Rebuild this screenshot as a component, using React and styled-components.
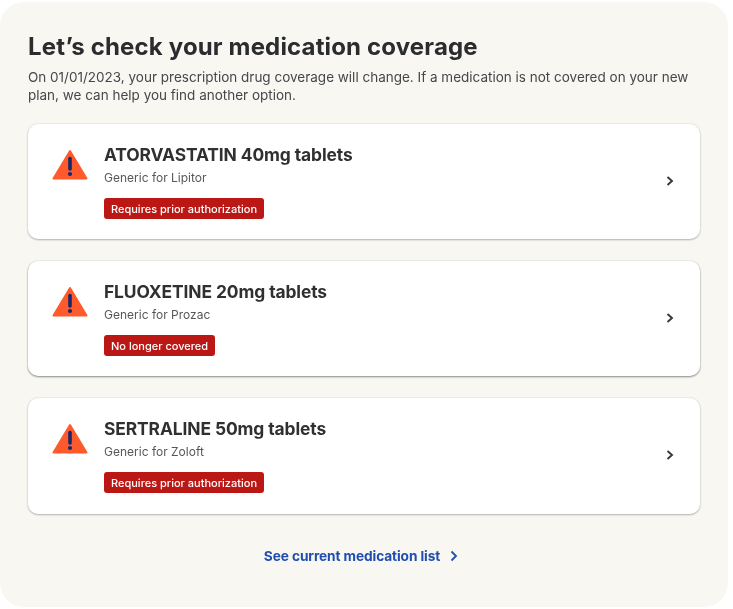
import React from "react";
import styled, { createGlobalStyle } from "styled-components";

const Global = createGlobalStyle`
  html, body { margin: 0; padding: 0; background: #fff; }
  body { font-family: Inter, "Noto Sans", sans-serif; }
`;

const Panel = styled.main`
  box-sizing: border-box;
  width: 728px;
  height: 605px;
  margin-top: 2px;
  padding: 29px 28px 0;
  background: #f8f7f2;
  border-radius: 24px;
  display: flex;
  flex-direction: column;
  filter: blur(0.4px);
`;

const Title = styled.h1`
  margin: 0;
  font-size: 24px;
  line-height: 32px;
  font-weight: 700;
  letter-spacing: 0.15px;
  color: #2b2c2e;
`;

const Intro = styled.p`
  margin: 5px 0 0;
  font-size: 13.5px;
  line-height: 18px;
  font-weight: 400;
  color: #45474a;
`;

const CardList = styled.div`
  margin-top: 20px;
  display: flex;
  flex-direction: column;
  gap: 22px;
`;

const Card = styled.article`
  box-sizing: border-box;
  height: ${p => p.$h}px;
  padding: 20px 24px 0;
  display: flex;
  align-items: flex-start;
  background: #fff;
  border-radius: 10px;
  box-shadow: 0 1px 2px 0 ${p => p.$dark ? "#8b8b88" : "#b3b3b0"}, 0 0 2px rgba(0, 0, 0, 0.14);
`;

const Alert = styled.svg`
  width: 36px;
  height: 32px;
  flex: none;
  margin-top: 5px;
`;

const Body = styled.div`
  margin-left: 16px;
  flex: 1;
  display: flex;
  flex-direction: column;
  align-items: flex-start;
`;

const Name = styled.h2`
  margin: 0;
  font-size: 17.4px;
  line-height: 22px;
  font-weight: 700;
  letter-spacing: -0.1px;
  color: #2f3032;
`;

const Generic = styled.div`
  margin-top: 4px;
  font-size: 12px;
  line-height: 16px;
  color: #55575a;
`;

const Badge = styled.span`
  margin-top: 12px;
  height: 21px;
  padding: 0 7px;
  display: inline-flex;
  align-items: center;
  background: #bb1714;
  border-radius: 3px;
  color: #fff;
  font-size: 11px;
  font-weight: 500;
`;

const Chevron = styled.svg`
  width: 10px;
  height: 12px;
  flex: none;
  align-self: center;
  margin-top: -22px;
  margin-right: 1px;
`;

const Footer = styled.a`
  margin-top: 32px;
  margin-right: 6px;
  align-self: center;
  display: inline-flex;
  align-items: center;
  gap: 10px;
  color: #1f4db0;
  font-size: 13.7px;
  line-height: 20px;
  font-weight: 700;
  letter-spacing: -0.1px;
  text-decoration: none;
`;

const FooterChevron = styled.svg`
  width: 8px;
  height: 12px;
`;

const AlertIcon = () => (
  <Alert viewBox="0 0 36 32" aria-hidden="true">
    <path d="M18 2 L34.5 29.5 H1.5 Z" fill="#ff5a2c" stroke="#ff5a2c" strokeWidth="2" strokeLinejoin="round" />
    <path d="M18 9.5 V20" stroke="#16286b" strokeWidth="3.6" strokeLinecap="round" />
    <circle cx="18" cy="25" r="2.1" fill="#16286b" />
  </Alert>
);

const meds = [
  { name: "ATORVASTATIN 40mg tablets", generic: "Generic for Lipitor", badge: "Requires prior authorization", h: 115 },
  { name: "FLUOXETINE 20mg tablets", generic: "Generic for Prozac", badge: "No longer covered", h: 115, dark: true },
  { name: "SERTRALINE 50mg tablets", generic: "Generic for Zoloft", badge: "Requires prior authorization", h: 116 },
];

export default function App() {
  return (
    <>
      <Global />
      <Panel>
        <Title>Let’s check your medication coverage</Title>
        <Intro>
          On 01/01/2023, your prescription drug coverage will change. If a medication is not covered on your new
          <br />
          plan, we can help you find another option.
        </Intro>
        <CardList>
          {meds.map(m => (
            <Card key={m.name} $h={m.h} $dark={m.dark}>
              <AlertIcon />
              <Body>
                <Name>{m.name}</Name>
                <Generic>{m.generic}</Generic>
                <Badge>{m.badge}</Badge>
              </Body>
              <Chevron viewBox="0 0 10 12" aria-hidden="true">
                <path d="M2.5 2 L7 6 L2.5 10" fill="none" stroke="#36383b" strokeWidth="1.9" />
              </Chevron>
            </Card>
          ))}
        </CardList>
        <Footer href="#">
          See current medication list
          <FooterChevron viewBox="0 0 8 12" aria-hidden="true">
            <path d="M1.5 1.5 L6 6 L1.5 10.5" fill="none" stroke="#1f4db0" strokeWidth="1.8" />
          </FooterChevron>
        </Footer>
      </Panel>
    </>
  );
}
